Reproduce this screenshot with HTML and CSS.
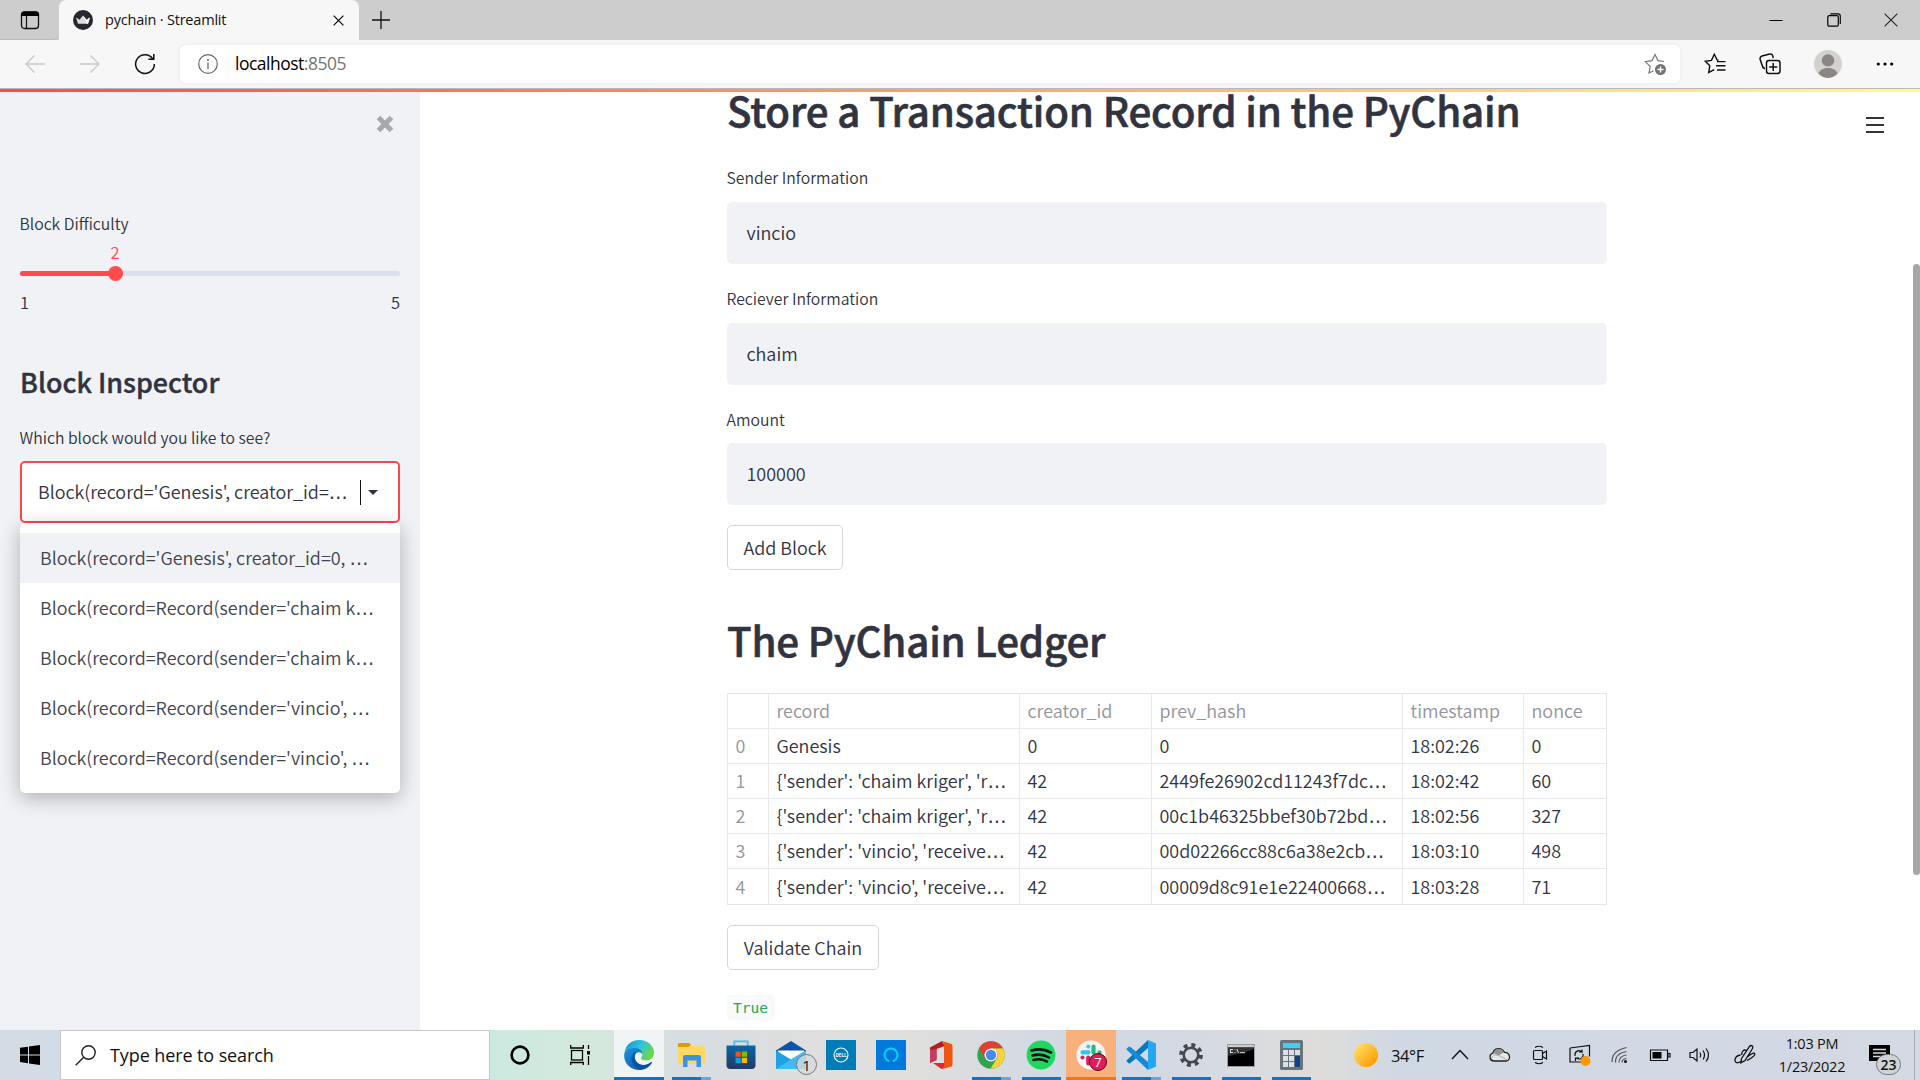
FILE: index.html
```html
<!DOCTYPE html>
<html lang="en">
<head>
<meta charset="utf-8">
<title>pychain · Streamlit</title>
<link rel="stylesheet" href="styles.css">
</head>
<body>
<div class="desktop">
  <header class="tabstrip">
    <div class="tab-actions"><svg width="20" height="20" viewBox="0 0 20 20"><rect x="1.5" y="2" width="17" height="16.5" rx="3" fill="none" stroke="#111" stroke-width="1.3"/><path d="M1 6V4.500a3 3 0 0 1 3-3h12a3 3 0 0 1 3 3V6z" fill="#000"/><path d="M6.500 6v12.500" stroke="#111" stroke-width="1.200"/></svg></div>
    <div class="tab">
      <svg class="favicon" width="20" height="20" viewBox="0 0 20 20"><circle cx="10" cy="10" r="10" fill="#262730"/><path d="M3 7.500l3.500 2.200L10 5.600l3.500 4.100L17 7.500l-2 6.300H5z" fill="#ddd"/><path d="M10 5.600l3.500 4.100L17 7.500l-2 6.300h-1.500z" fill="#fff"/></svg>
      <span class="tab-title">pychain · Streamlit</span>
      <svg class="tab-close" width="11" height="11" viewBox="0 0 11 11"><path d="M.6.6l9.800 9.800M10.400.6L.6 10.400" stroke="#111" stroke-width="1.300"/></svg>
    </div>
    <svg class="new-tab" width="18" height="18" viewBox="0 0 18 18"><path d="M9 0v18M0 9h18" stroke="#111" stroke-width="1.300"/></svg>
    <div class="window-controls">
      <span><svg width="14" height="14" viewBox="0 0 14 14"><path d="M.5 7.500h13" stroke="#000"/></svg></span>
      <span><svg width="14" height="14" viewBox="0 0 14 14"><rect x=".8" y="2.700" width="10.500" height="10.500" rx="1.500" fill="none" stroke="#000" stroke-width="1.200"/><path d="M3.300.9h7.700a2.300 2.300 0 0 1 2.300 2.300v7.800" fill="none" stroke="#000" stroke-width="1.100"/></svg></span>
      <span><svg width="14" height="14" viewBox="0 0 14 14"><path d="M.6.6l12.800 12.800M13.400.6L.6 13.400" stroke="#222" stroke-width="1.100"/></svg></span>
    </div>
  </header>

  <div class="toolbar">
    <div class="nav">
      <svg width="20" height="20" viewBox="0 0 20 20" fill="none" stroke="#c9c9c9" stroke-width="1.300"><path d="M20 10H1M9.500 1.500L1 10l8.500 8.500"/></svg>
      <svg width="20" height="20" viewBox="0 0 20 20" fill="none" stroke="#c9c9c9" stroke-width="1.300"><path d="M0 10h19M10.500 1.500L19 10l-8.500 8.500"/></svg>
      <svg width="22" height="22" viewBox="0 0 22 22" fill="none" stroke="#111" stroke-width="1.500"><path d="M18.800 5.800A9.400 9.400 0 1 0 20.400 11M19.800 1v5.300h-5.400"/></svg>
    </div>
    <div class="address">
      <svg width="20" height="20" viewBox="0 0 20 20"><circle cx="10" cy="10" r="9.300" fill="none" stroke="#666" stroke-width="1.200"/><path d="M10 8.500v6.500" stroke="#666" stroke-width="1.300"/><circle cx="10" cy="6" r="1" fill="#666"/></svg>
      <span class="url">localhost<i>:8505</i></span>
      <svg width="22" height="22" viewBox="0 0 22 22"><path d="M20 8.500l-6-.9L11 1.500 8 7.600l-6.800 1 5 4.800L5 20l4.500-2.300" fill="none" stroke="#777" stroke-width="1.200"/><circle cx="16.500" cy="16.500" r="5.500" fill="#757575"/><path d="M16.500 13.500v6M13.500 16.500h6" stroke="#fff" stroke-width="1.300"/></svg>
    </div>
    <div class="tools">
      <svg width="22" height="22" viewBox="0 0 22 22" fill="none" stroke="#111" stroke-width="1.400"><path d="M14.500 7.300l-1.300-.2L10.300 1.300 7.500 7.400l-6.200.9 4.500 4.400L4.700 19.500l5.600-2.800M13 8.600h8.500M12 12.800h9.500M13 17h8.500"/></svg>
      <svg width="22" height="22" viewBox="0 0 22 22" fill="none" stroke="#111" stroke-width="1.500"><rect x="7.500" y="7.500" width="13.500" height="13" rx="2.500"/><path d="M14.200 10v8M10.200 14h8M6 15.500C4 15.500 3.600 14 3.200 12.500L1.200 6.500C.7 4.500 1.500 3.500 3 3l7.800-1.900c1.600-.3 2.500.4 2.900 1.600l.5 2.300"/></svg>
      <svg width="28" height="28" viewBox="0 0 28 28"><circle cx="14" cy="14" r="14" fill="#d3d1ce"/><circle cx="14" cy="10.400" r="6.200" fill="#8b8683"/><path d="M4.500 23.500C6 19.700 9.500 18 14 18s8 1.700 9.500 5.500A14 14 0 0 1 14 28a14 14 0 0 1-9.500-4.500z" fill="#8b8683"/></svg>
      <svg width="18" height="4" viewBox="0 0 18 4" fill="#000"><circle cx="2.300" cy="2" r="1.600"/><circle cx="9" cy="2" r="1.600"/><circle cx="15.700" cy="2" r="1.600"/></svg>
    </div>
  </div>

  <div class="viewport">
    <aside class="sidebar">
      <svg class="sidebar-close" width="18" height="18" viewBox="0 0 18 18"><path d="M2.500 2.500l13 13M15.500 2.500l-13 13" stroke="#a5a8af" stroke-width="5"/></svg>
      <div class="label difficulty">Block Difficulty</div>
      <div class="slider-value">2</div>
      <div class="track"><div class="fill"></div><div class="thumb"></div></div>
      <div class="limits"><span>1</span><span>5</span></div>
      <h3>Block Inspector</h3>
      <div class="label question">Which block would you like to see?</div>
      <div class="select">
        <span class="select-text">Block(record='Genesis', creator_id=<b>…</b></span>
        <span class="cursor"></span><span class="arrow"></span>
        <ul class="menu">
          <li class="active">Block(record='Genesis', creator_id=0, <b>…</b></li>
          <li>Block(record=Record(sender='chaim k<b>…</b></li>
          <li>Block(record=Record(sender='chaim k<b>…</b></li>
          <li>Block(record=Record(sender='vincio', <b>…</b></li>
          <li>Block(record=Record(sender='vincio', <b>…</b></li>
        </ul>
      </div>
    </aside>
    <main class="main">
      <h2 class="title">Store a Transaction Record in the PyChain</h2>
      <div class="field"><div class="label">Sender Information</div><div class="input">vincio</div></div>
      <div class="field"><div class="label">Reciever Information</div><div class="input">chaim</div></div>
      <div class="field amount"><div class="label">Amount</div><div class="input">100000</div></div>
      <div class="button add">Add Block</div>
      <h2 class="ledger">The PyChain Ledger</h2>
      <div class="table">
        <div class="row head"><span></span><span>record</span><span>creator_id</span><span>prev_hash</span><span>timestamp</span><span>nonce</span></div>
        <div class="row"><span>0</span><span>Genesis</span><span>0</span><span>0</span><span>18:02:26</span><span>0</span></div>
        <div class="row"><span>1</span><span>{'sender': 'chaim kriger', 'r<b>…</b></span><span>42</span><span>2449fe26902cd11243f7dc<b>…</b></span><span>18:02:42</span><span>60</span></div>
        <div class="row"><span>2</span><span>{'sender': 'chaim kriger', 'r<b>…</b></span><span>42</span><span>00c1b46325bbef30b72bd<b>…</b></span><span>18:02:56</span><span>327</span></div>
        <div class="row"><span>3</span><span>{'sender': 'vincio', 'receive<b>…</b></span><span>42</span><span>00d02266cc88c6a38e2cb<b>…</b></span><span>18:03:10</span><span>498</span></div>
        <div class="row"><span>4</span><span>{'sender': 'vincio', 'receive<b>…</b></span><span>42</span><span>00009d8c91e1e22400668<b>…</b></span><span>18:03:28</span><span>71</span></div>
      </div>
      <div class="button validate">Validate Chain</div>
      <code class="result">True</code>
    </main>
    <div class="burger"><i></i><i></i><i></i></div>
    <div class="scrollbar"></div>
    <div class="decoration"></div>
  </div>

  <footer class="taskbar">
    <div class="start"><svg width="20" height="20" viewBox="0 0 20 20"><path d="M0 2.800L8 1.700v7.800H0zM9 1.500L20 0v9.500H9zM0 10.400h8v7.800l-8-1.100zM9 10.400h11V20L9 18.400z"/></svg></div>
    <div class="search"><svg width="21" height="21" viewBox="0 0 21 21"><circle cx="13.500" cy="7.500" r="6.700" fill="none" stroke="#222" stroke-width="1.400"/><path d="M8.700 12.300L.7 20.300" stroke="#222" stroke-width="1.400"/></svg><span>Type here to search</span></div>
    <div class="slot wide1"><svg width="20" height="20" viewBox="0 0 20 20"><circle cx="10" cy="10" r="8.400" fill="none" stroke="#000" stroke-width="2.600"/></svg></div>
    <div class="slot wide2"><svg width="21" height="20" viewBox="0 0 21 20" fill="none" stroke="#000" stroke-width="1.300"><rect x="1.500" y="5.500" width="11" height="9.500"/><path d="M.7 0v3h12.600V0M.7 20v-2.500h12.600V20M18.500 0v4M18.500 11v9"/><path d="M18.500 6v3.500" stroke-width="3"/></svg></div>
    <div class="slot current"><svg width="30" height="30" viewBox="0 0 30 30">
      <defs><linearGradient id="e1" x1="0" y1="0" x2="1" y2=".5"><stop offset="0" stop-color="#168fd3"/><stop offset=".55" stop-color="#2fc4dc"/><stop offset="1" stop-color="#6ad84b"/></linearGradient><linearGradient id="e2" x1="0" y1="0" x2="1" y2="1"><stop offset="0" stop-color="#1696dd"/><stop offset="1" stop-color="#0c4aa0"/></linearGradient></defs>
      <path d="M.5 13C1.500 5 7.500 0 15 0c9 0 15 6 15 12.500 0 5-3.500 8-8 8-3.500 0-5-1.300-5-2.300 0-.8 1.300-1.500 1.300-4C18.300 11 15.500 8.500 11 8.500 6 8.500 2 10 .5 13z" fill="url(#e1)"/>
      <path d="M.2 14.500C.6 10.500 5 8 10.500 8c5 0 7.900 2.600 7.900 6-1.500-2-4-2.500-5.900-1-3 2.400-2 8.500 3 11 4 2 8.500.5 11.500-1.800.8-.5 1.200.1.700.8C25 27.500 20.500 30 15.500 30 7 30-.6 23.500.2 14.500z" fill="url(#e2)"/>
      <path d="M7.500 19c-.3-4 2-6.500 5-7.300-3.500 3.500-2 10 3 12.500 4 2 8.500.5 11.500-2 .8-.5 1.200.1.700.8-2.200 3.200-6 6-11 6C12 28.500 8 25 7.500 19z" fill="#0b4c9c" opacity=".85"/></svg><u class="run full"></u></div>
    <div class="slot"><svg width="28" height="26" viewBox="0 0 28 26"><path d="M1 2.500A1.500 1.500 0 0 1 2.500 1H12l2 3h12.500A1.500 1.500 0 0 1 28 5.500V22H1z" fill="#ffd764"/><path d="M1 2.500A1.500 1.500 0 0 1 2.500 1H12l2 1.500L12 5H1z" fill="#dd9d08"/><path d="M6 25V15q0-2 2-2h14q2 0 2 2v10h-4.500v-6.500h-9V25z" fill="#3b94e0"/></svg><u class="run more"></u></div>
    <div class="slot"><svg width="30" height="30" viewBox="0 0 30 30"><defs><linearGradient id="st" x1="0" y1="0" x2="0" y2="1"><stop offset="0" stop-color="#0966a9"/><stop offset="1" stop-color="#253862"/></linearGradient></defs><path d="M8.300 7V1.300h13.400V7" fill="none" stroke="#43c3f2" stroke-width="1.800"/><path d="M.5 5.500h29V25q0 4-4 4h-21q-4 0-4-4z" fill="url(#st)"/><path d="M9.500 11.500h5.300v5.300H9.500z" fill="#f25022"/><path d="M15.800 11.500h5.300v5.300h-5.300z" fill="#7fba00"/><path d="M9.500 17.800h5.300v5.300H9.500z" fill="#00a4ef"/><path d="M15.800 17.800h5.300v5.300h-5.300z" fill="#ffb900"/></svg></div>
    <div class="slot"><svg width="30" height="28" viewBox="0 0 30 28"><path d="M0 9.500L15 0l15 9.500V18H0z" fill="#0a55a5"/><path d="M2 9.500h26V20H2z" fill="#fff"/><path d="M0 9.500l15 9 15-9V28H0z" fill="#1fa1e8"/><path d="M0 28L15 18.500 30 9.500V28z" fill="#43baf0"/></svg><em class="badge mail">1</em></div>
    <div class="slot"><svg width="30" height="30" viewBox="0 0 30 30"><path d="M0 0h30v30H0z" fill="#007db8"/><circle cx="15" cy="15" r="7" fill="none" stroke="#fff" stroke-width="1.100"/><text x="15" y="17" text-anchor="middle" class="dell">DELL</text></svg></div>
    <div class="slot"><svg width="30" height="30" viewBox="0 0 30 30"><path d="M0 0h30v30H0z" fill="#0078dc"/><path d="M13 21.200a6.500 6.500 0 1 1 4 0" fill="none" stroke="#08d1fb" stroke-width="2"/></svg></div>
    <div class="slot"><svg width="24" height="28" viewBox="0 0 24 28"><path d="M1 6.500L13 0l3 5-8.500 3v11L1 22z" fill="#b02020"/><path d="M13 0l9 2.700q1.500.5 1.500 2v19q0 1.500-1.500 2L13 28q2-.5 2-3V4q0-3-2-4z" fill="#ed5512"/><path d="M4 22h11v3q0 3-2.500 3z" fill="#e0282d"/><path d="M1 9l6.500-1v11L1 22z" fill="#c83b61"/></svg></div>
    <div class="slot"><svg width="28" height="28" viewBox="0 0 28 28"><circle cx="14" cy="14" r="13.700" fill="#31a350"/><path d="M2 7.300A13.700 13.700 0 0 1 26 7.500H14L8 17.500z" fill="#df4034"/><path d="M26 7.500A13.700 13.700 0 0 1 13.500 27.700l6.500-10.400a7 7 0 0 0 0-6.600L14 7.500z" fill="#fdd13c"/><circle cx="14" cy="14" r="6.500" fill="#fff"/><circle cx="14" cy="14" r="5.200" fill="#4788f2"/></svg><u class="run more"></u></div>
    <div class="slot"><svg width="30" height="30" viewBox="0 0 30 30"><circle cx="15" cy="15" r="14.400" fill="#1ed760"/><path d="M5.500 10.500q10-3 19.500 2M6.500 15.500q9-2.500 16.500 2M7.500 20q7.500-2 13.500 1.500" fill="none" stroke="#111" stroke-width="2.600" stroke-linecap="round"/></svg><u class="run"></u></div>
    <div class="slot alert"><svg width="30" height="30" viewBox="0 0 30 30"><circle cx="15" cy="15" r="14.600" fill="#f4f4f4"/><g stroke-width="4.200" stroke-linecap="round"><path d="M12.300 6.500h0M6.500 12.300h6" stroke="#36c5f0"/><path d="M17.500 6.500v6M23.500 12.300h0" stroke="#2eb67d"/><path d="M12.300 17.500v6M6.500 17.500h0" stroke="#e01e5a"/><path d="M17.500 17.500h6M17.500 23h0" stroke="#ecb22e"/></g></svg><em class="badge slack">7</em><u class="run full orange"></u></div>
    <div class="slot"><svg width="30" height="30" viewBox="0 0 30 30"><path d="M22 0l8 3.500v23L22 30z" fill="#24a7f1"/><path d="M1 20L22 0v8L4.500 23q-1 1-2 0L.8 21.500q-.8-.8.200-1.500z" fill="#0778bf"/><path d="M1 10L22 30v-8L4.500 7q-1-1-2 0L.8 8.500Q0 9.300 1 10z" fill="#168ad2"/></svg><u class="run more"></u></div>
    <div class="slot"><svg width="24" height="24" viewBox="0 0 24 24"><circle cx="12" cy="12" r="10" fill="none" stroke="#46484b" stroke-width="3.800" stroke-dasharray="3.930 3.930"/><circle cx="12" cy="12" r="7.300" fill="none" stroke="#46484b" stroke-width="2.600"/></svg><u class="run"></u></div>
    <div class="slot"><svg width="28" height="23" viewBox="0 0 28 23"><path d="M.5.5h27v22H.5z" fill="#000" stroke="#9a9da1"/><path d="M1 1h26v2.500H1z" fill="#c9cccf"/><path d="M1 12q14-2 26-7V3.500H1z" fill="#333"/><path d="M3 5.500h3M3 8.500h3M3.500 5.500v3M8 5.500v.8M8 8v.8M10 5l1.500 4M13 8.700h5" stroke="#ddd" fill="none"/></svg><u class="run"></u></div>
    <div class="slot"><svg width="23" height="30" viewBox="0 0 23 30"><rect width="23" height="30" rx="1.500" fill="#68737d"/><path d="M3 3h17v5H3z" fill="#3fd0f5"/><path d="M3 10h5v5H3zM9 10h5v5H9zM15 10h5v5h-5zM3 16h5v5H3zM9 16h5v5H9zM3 22h5v5H3zM9 22h5v5H9z" fill="#dce1e5"/><path d="M15 16h5v11h-5z" fill="#0f4388"/></svg><u class="run"></u></div>
    <div class="tray">
      <svg class="sun" width="24" height="24" viewBox="0 0 24 24"><defs><linearGradient id="sn" x1="0" y1="0" x2="1" y2="1"><stop offset=".1" stop-color="#ffdf62"/><stop offset=".9" stop-color="#ff9800"/></linearGradient></defs><circle cx="12" cy="12" r="12" fill="url(#sn)"/></svg>
      <span class="temp">34°F</span>
      <div class="icons">
        <svg width="24" height="24" viewBox="0 0 24 24"><path d="M4 16l8-8.500 8 8.500" fill="none" stroke="#111" stroke-width="1.400"/></svg>
        <svg width="24" height="24" viewBox="0 0 24 24"><path d="M5.500 18a4 4 0 0 1-.6-7.800C6 5 13.500 3.500 16.200 9.300c5.500-.3 7.300 6.500 2.500 8.700z" fill="#e7e7e7" stroke="#222" stroke-width="1.300"/><path d="M5.500 10C7 5 13.500 4 16 9.300l-5.500 3.200z" fill="#929292"/><path d="M4 15.500c0-4 4-4.500 8-2.500l7 4" fill="none" stroke="#999" stroke-width=".8"/></svg>
        <svg width="24" height="24" viewBox="0 0 24 24" fill="none" stroke="#111" stroke-width="1.200"><rect x="5.500" y="7.500" width="9" height="9" rx="1"/><path d="M14.500 10.500l4-2.500v8l-4-2.500M7 4.500q4-2.500 8 0M7 19.500q4 2.500 8 0"/></svg>
        <svg width="24" height="24" viewBox="0 0 24 24" fill="none" stroke="#111" stroke-width="1.200"><path d="M2 5l19.500-2.500v11M2 5v14h11M7 13v-1.500a4 4 0 0 1 7-2.500V6.500M14 9h-3M15 11v2a4 4 0 0 1-6.500 2H7.500v3M8.500 15h2.500"/><circle cx="17.500" cy="18" r="5" fill="#ff9800" stroke="none"/></svg>
        <svg width="24" height="24" viewBox="0 0 24 24" fill="none" stroke="#555" stroke-width="1.200"><path d="M4 19Q3.500 8 18.500 4.500M7.500 19.500Q7 10.500 18.500 8.500M11 19.500q0-6.500 7.500-7.500M14 19.500q0-3.500 4.500-4"/><circle cx="17.500" cy="18.500" r="1.500" fill="#111" stroke="none"/></svg>
        <svg width="24" height="24" viewBox="0 0 24 24"><path d="M2.500 7h17v10.500h-17zM20 10.500h2v3.500h-2z" fill="none" stroke="#111" stroke-width="1.200"/><path d="M4.500 9h9v6.500h-9z"/></svg>
        <svg width="24" height="24" viewBox="0 0 24 24" fill="none" stroke="#111" stroke-width="1.200"><path d="M2 9.500h3l4-3.500v12l-4-3.500H2zM12 9.500q1.500 2.500 0 5M15 7.500q3 4.500 0 9M18 5.500q5 6.500 0 13"/></svg>
        <svg class="pen" width="24" height="24" viewBox="0 0 24 24" fill="none" stroke="#111" stroke-width="1.300"><path d="M8.500 15.500L16.500 3.500q1.200-1.600 2.600-.6t.4 2.600L12 17.500l-4 2.300zM13.500 7.500Q9.500 5.500 8.500 12M7.500 12C1 13 .5 19.500 4.500 19.800q2.500 0 3.500-1.800M15 13.500q6-5 6.800-2.800T14 17.500"/></svg>
      </div>
      <div class="clock"><span>1:03 PM</span><span>1/23/2022</span></div>
      <div class="notes"><svg width="22" height="21" viewBox="0 0 22 21"><path d="M0 0h21v16H6l-5 0H0z"/><path d="M4 4.500h13M4 8h13M4 11.500h8" stroke="#d3dae4" stroke-width="1.400"/></svg><em class="badge count">23</em></div>
      <div class="show-desktop"></div>
    </div>
  </footer>
</div>
</body>
</html>
```
FILE: styles.css
```css
* { box-sizing: border-box; }
body { margin: 0; width: 1920px; height: 1080px; overflow: hidden; font-family: "Noto Sans CJK SC", "Open Sans", sans-serif; font-size: 17.95px; font-weight: 350; color: #31333f; }
svg { display: block; flex: none; }
i, em { font-style: normal; }
b { font-family: "DejaVu Sans", sans-serif; font-weight: 400; font-size: 19px; line-height: 0; }
h2, h3 { margin: 0; font-weight: 500; }
.desktop { display: flex; flex-direction: column; height: 1080px; }

.tabstrip { display: flex; align-items: center; height: 40px; background: #cdcdcd; flex: none; font-family: "Open Sans", sans-serif; font-weight: 400; }
.tab-actions { width: 59px; height: 40px; padding: 10px 0 0 20px; border-bottom: 1px solid #bbb; border-bottom-right-radius: 6px; }
.tab { display: flex; align-items: center; width: 300px; height: 40px; padding-left: 14px; background: #f7f7f7; border-radius: 7px 7px 0 0; color: #111; }
.tab-title { width: 228px; margin: -2px 0 0 12px; font-size: 14.5px; letter-spacing: -0.2px; }
.new-tab { margin-left: 13px; }
.window-controls { display: flex; margin-left: auto; }
.window-controls span { width: 57.5px; display: flex; justify-content: center; }

.toolbar { display: flex; align-items: center; height: 49px; padding-bottom: 1px; background: #f7f7f7; border-bottom: 1px solid #b9b9b9; flex: none; }
.nav { display: flex; align-items: center; width: 180px; gap: 35px; padding-left: 25px; }
.nav svg:last-child { margin-left: -1px; }
.address { display: flex; align-items: center; width: 1500px; height: 38px; padding: 0 14px 0 18px; background: #fff; border-radius: 6px; box-shadow: 0 0 4px #e6e6e6; }
.url { flex: 1; margin: -1px 0 0 17px; font: 17.5px "Open Sans", sans-serif; letter-spacing: -0.5px; color: #000; }
.url i { color: #757575; }
.tools { display: flex; align-items: center; margin-left: 24px; gap: 33px; }
.tools svg:last-child { margin-left: 1px; }

.viewport { position: relative; display: flex; height: 941px; background: #fff; flex: none; }
.decoration { position: absolute; top: 0; left: 0; width: 100%; height: 3px; background: linear-gradient(90deg, #ff4b4b, #fffd80); }
.sidebar { width: 420px; padding: 26px 20px 0; background: #f0f2f6; flex: none; }
.sidebar-close { margin-left: 356px; }
.label { height: 28px; line-height: 30px; font-size: 15.75px; margin-left: -0.5px; }
.difficulty { margin-top: 76px; }
.slider-value { width: 190px; height: 20px; margin-top: 5px; text-align: center; font-size: 16.5px; line-height: 20px; color: #ff4b4b; }
.track { display: flex; align-items: center; height: 5px; margin-top: 9px; background: #dadfe9; border-radius: 3px; }
.fill { width: 95px; height: 5px; background: #ff4b4b; border-radius: 3px; }
.thumb { width: 15px; height: 15px; margin-left: -7.5px; border-radius: 50%; background: #ff4b4b; }
.limits { display: flex; justify-content: space-between; height: 20px; margin-top: 16px; line-height: 20px; font-size: 16.5px; }
h3 { height: 40px; margin-top: 49px; line-height: 42px; font-size: 26.9px; -webkit-text-stroke: 0.4px #31333f; }
.question { margin-top: 22px; }
.select { position: relative; display: flex; align-items: center; height: 62px; margin-top: 10px; padding-left: 16px; background: #fff; border: 2px solid #f9494d; border-radius: 5px; white-space: nowrap; }
.select-text { width: 322px; line-height: 28px; margin-top: -2px; }
.cursor { width: 1px; height: 25px; background: #111; }
.arrow { margin-left: 7px; border: 5px solid transparent; border-top: 5px solid #31333f; border-bottom: 0; }
.menu { position: absolute; top: 60px; left: -2px; width: 380px; height: 270px; margin: 0; padding: 10px 0; list-style: none; background: #fff; border-radius: 5px; box-shadow: 0 5px 20px rgba(0,0,0,.28); color: #42444f; }
.menu li { height: 50px; padding-left: 20px; line-height: 48px; }
.menu .active { background: #f0f2f6; }

.main { width: 880px; margin-left: 307px; }
h2 { height: 40px; line-height: 42px; font-size: 40.3px; letter-spacing: -0.18px; -webkit-text-stroke: 0.6px #31333f; white-space: nowrap; }
.title { margin-bottom: 34px; }
.field { height: 101px; margin-bottom: 20px; }
.input { height: 62px; margin-top: 11px; padding-left: 19.5px; line-height: 60px; background: #f0f2f6; border-radius: 5px; }
.amount { height: 100px; }
.amount .input { margin-top: 10px; }
.button { height: 45px; border: 1px solid #d6d6d9; border-radius: 5px; line-height: 43px; text-align: center; }
.add { width: 116px; }
.ledger { margin: 49px 0 34px; }
.table { border: 1px solid #e6e6e9; height: 212px; }
.row { display: grid; grid-template-columns: 40px 251px 132px 251px 121px 1fr; height: 35px; line-height: 32px; border-bottom: 1px solid #e9e9eb; }
.row:last-child { border-bottom: 0; line-height: 34px; }
.row span { padding-left: 7.5px; border-left: 1px solid #e9e9eb; white-space: nowrap; }
.row span:first-child { border-left: 0; color: #93949c; }
.row.head span { color: #93949c; }
.validate { width: 152px; margin-top: 20px; }
.result { display: block; width: 48px; height: 25px; margin-top: 25px; padding: 0 6px; border-radius: 4px; background: #f8f9fb; color: #21a853; font: 14.5px/27px "DejaVu Sans Mono", monospace; }
.burger { position: absolute; top: 28px; left: 1866px; display: flex; flex-direction: column; gap: 5px; }
.burger i { width: 18px; height: 2px; background: #31333f; }
.scrollbar { position: absolute; top: 175px; right: 0; width: 7px; height: 611px; border-radius: 4px; background: #a7a7a9; }

.taskbar { display: flex; align-items: stretch; height: 50px; flex: none; font-family: "Open Sans", sans-serif; font-weight: 400; color: #111; background: linear-gradient(90deg, #d4dbe5 0, #d2dce6 60px, #cce9e1 490px, #d4e9dc 590px, #d7dde2 690px, #dcdedf 760px, #e0dfdc 900px, #d9dce0 980px, #cfd8e4 1090px, #d5dae2 1200px, #dedddb 1320px, #cfd8e3 1400px, #d4d9e3 1920px); }
.start { display: flex; align-items: center; width: 60px; padding-left: 20px; flex: none; }
.search { display: flex; align-items: center; width: 430px; padding-left: 14px; gap: 14px; background: #fff; border: 1px solid #c5c7c9; font-size: 18px; letter-spacing: -0.1px; flex: none; }
.slot { position: relative; display: flex; align-items: center; justify-content: center; width: 50px; flex: none; }
.wide1 { width: 60px; }
.wide2 { width: 64px; padding-right: 4px; }
.current { margin-right: 2px; background: #f0f4f4; }
.alert { background: #f8b07d; }
.run { position: absolute; bottom: 0; left: 6px; width: 39px; height: 3px; background: #0078d7; }
.run.full { left: 0; width: 100%; }
.run.more { background: linear-gradient(90deg, #0078d7 74%, #62a9e4 74%); }
.run.orange { background: #ff7200; }
.badge { position: absolute; display: flex; align-items: center; justify-content: center; border-radius: 50%; }
.mail { left: 30px; top: 24px; width: 21px; height: 21px; border: 1px solid #777; background: rgba(215,218,220,.8); font-size: 15px; }
.slack { left: 23px; top: 23px; width: 18px; height: 18px; border: 1.500px solid #3b1020; background: #e01e5a; color: #fff; font-size: 13px; }
.dell { font: 700 4.500px "Open Sans", sans-serif; fill: #fff; }
.tray { display: flex; align-items: center; flex: 1; }
.sun { margin-left: 38px; }
.temp { width: 57px; margin-left: 13px; font-size: 16.5px; letter-spacing: -0.4px; }
.icons { display: flex; gap: 16px; }
.icons .pen { margin-left: 5px; }
.clock { display: flex; flex-direction: column; width: 72px; margin-left: 19px; text-align: center; font-size: 14.5px; line-height: 23px; letter-spacing: -0.25px; white-space: nowrap; }
.notes { position: relative; margin-left: 21px; }
.count { left: 7px; top: 9px; width: 25px; height: 21px; border: 1px solid #777; border-radius: 11px; background: #cfd2d6; font-size: 14px; font-weight: 600; }
.show-desktop { width: 6px; height: 50px; margin-left: auto; border-left: 1px solid #a9aeb6; }
```
